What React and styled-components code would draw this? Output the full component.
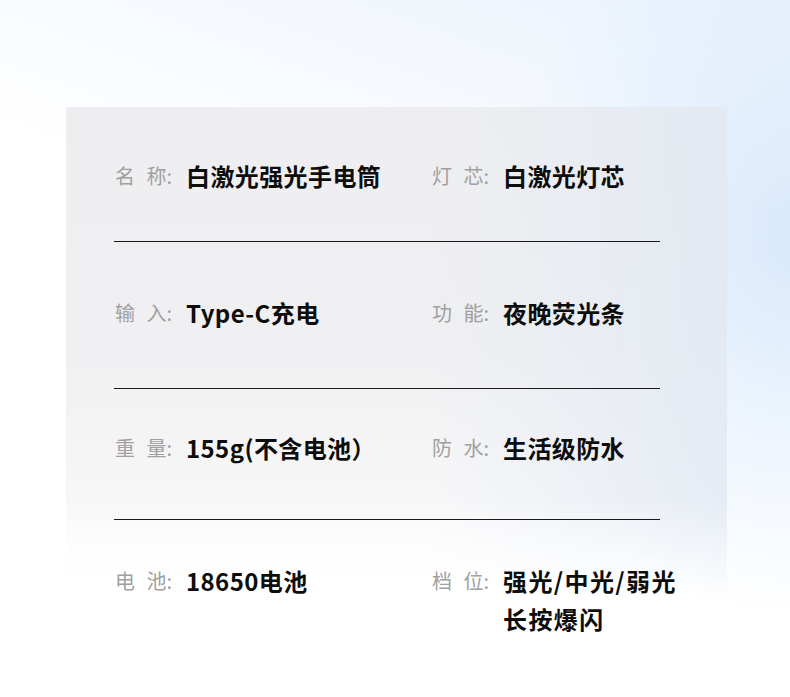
import React from "react";
import styled, { createGlobalStyle } from "styled-components";

const GlobalStyle = createGlobalStyle`
  html, body {
    margin: 0;
    padding: 0;
    background: #fff;
  }
  body {
    font-family: "Noto Sans CJK SC", "Noto Sans", sans-serif;
  }
`;

const Page = styled.div`
  width: 790px;
  height: 697px;
  overflow: hidden;
  box-sizing: border-box;
  padding: 107px 0 0 66px;
  background:
    radial-gradient(ellipse 280px 380px at 100% 34%, #d9e9fb 0%, rgba(224, 237, 252, 0.65) 45%, rgba(255, 255, 255, 0) 100%),
    linear-gradient(200deg, #eaf2fc 0%, #ffffff 42%);
`;

const Card = styled.div`
  position: relative;
  isolation: isolate;
  width: 661px;
  box-sizing: border-box;
  padding: 0 67px 0 48px;

  &::before {
    content: "";
    position: absolute;
    left: 0;
    top: 0;
    width: 100%;
    height: 490px;
    z-index: -1;
    background:
      linear-gradient(90deg, rgba(228, 234, 242, 0) 55%, rgba(224, 232, 243, 0.75) 100%),
      linear-gradient(180deg, #eeeef0 0%, #f0f0f2 50%, #f7f7f8 80%, #ffffff 100%);
    -webkit-mask-image: linear-gradient(180deg, #000 0%, #000 80%, transparent 100%);
    mask-image: linear-gradient(180deg, #000 0%, #000 80%, transparent 100%);
  }
`;

const Row = styled.div`
  display: grid;
  grid-template-columns: 317px 1fr;
  padding: ${(p) => p.$pt}px 0 ${(p) => p.$pb}px 1px;
  border-bottom: ${(p) => (p.$last ? "none" : "1px solid #1a1a1a")};
`;

const Field = styled.div`
  display: flex;
  align-items: flex-start;
`;

const Label = styled.span`
  width: 71px;
  flex-shrink: 0;
  font-size: 20px;
  line-height: 32px;
  color: #a0a0a0;
  word-spacing: 7px;
  white-space: pre;
`;

const Value = styled.span`
  font-size: 24px;
  line-height: 38px;
  margin: -3px 0;
  font-weight: 700;
  color: #0d0d0d;
  letter-spacing: ${(p) => p.$ls || 0.4}px;
  white-space: nowrap;
`;

const rows = [
  { pt: 53, pb: 49, l: ["名 称:", "白激光强光手电筒"], r: ["灯 芯:", "白激光灯芯"] },
  { pt: 55, pb: 59, l: ["输 入:", "Type-C充电"], r: ["功 能:", "夜晚荧光条"] },
  { pt: 43, pb: 55, l: ["重 量:", "155g(不含电池）"], r: ["防 水:", "生活级防水"] },
  { pt: 45, pb: 0, l: ["电 池:", "18650电池"], r: ["档 位:", "强光/中光/弱光\n长按爆闪"], ls: 1.4, last: true },
];

function App() {
  return (
    <Page>
      <GlobalStyle />
      <Card>
        {rows.map((row, i) => (
          <Row key={i} $pt={row.pt} $pb={row.pb} $last={row.last}>
            <Field>
              <Label>{row.l[0]}</Label>
              <Value>{row.l[1]}</Value>
            </Field>
            <Field>
              <Label>{row.r[0]}</Label>
              <Value $ls={row.ls}>
                {row.r[1].split("\n").map((line, j) => (
                  <div key={j}>{line}</div>
                ))}
              </Value>
            </Field>
          </Row>
        ))}
      </Card>
    </Page>
  );
}

export default App;
